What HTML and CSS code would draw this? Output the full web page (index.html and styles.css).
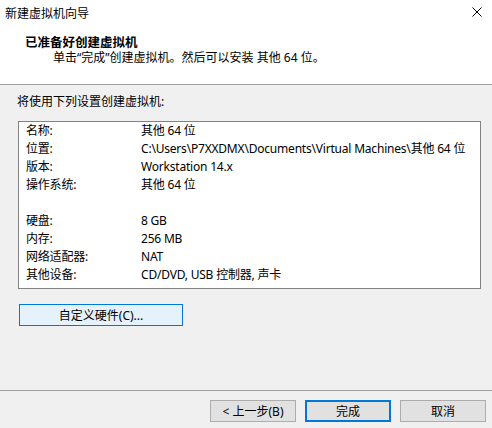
FILE: index.html
```html
<html>
    <head>
        <meta charset="UTF-8">
        <link rel="stylesheet" href="styles.css">
    </head>
    <body>
        <div class="dialog">
            <div class="header">
                <div class="titlebar">
                    <span class="title">新建虚拟机向导</span>
                    <span class="close">
                        <svg width="10" height="10" viewBox="0 0 10 10">
                            <path d="M0.5 0.5 L9.5 9.5 M9.5 0.5 L0.5 9.5" stroke="#000" stroke-width="1" fill="none"/>
                        </svg>
                    </span>
                </div>
                <h1>已准备好创建虚拟机</h1>
                <p class="subtitle">单击“完成”创建虚拟机。然后可以安装 其他 64 位。</p>
            </div>
            <div class="content">
                <p class="intro">将使用下列设置创建虚拟机:</p>
                <div class="summary">
                    <div class="row"><span class="key">名称:</span><span>其他 64 位</span></div>
                    <div class="row"><span class="key">位置:</span><span>C:\Users\P7XXDMX\Documents\Virtual Machines\其他 64 位</span></div>
                    <div class="row"><span class="key">版本:</span><span>Workstation 14.x</span></div>
                    <div class="row"><span class="key">操作系统:</span><span>其他 64 位</span></div>
                    <div class="row"></div>
                    <div class="row"><span class="key">硬盘:</span><span>8 GB</span></div>
                    <div class="row"><span class="key">内存:</span><span>256 MB</span></div>
                    <div class="row"><span class="key">网络适配器:</span><span>NAT</span></div>
                    <div class="row"><span class="key">其他设备:</span><span>CD/DVD, USB 控制器, 声卡</span></div>
                </div>
                <button class="btn customize">自定义硬件(C)...</button>
            </div>
            <div class="footer">
                <button class="btn">&lt; 上一步(B)</button>
                <button class="btn default">完成</button>
                <button class="btn">取消</button>
            </div>
        </div>
    </body>
</html>
```

FILE: styles.css
```css
body {
    margin: 0;
    font-family: "Noto Sans", "Noto Sans CJK SC", sans-serif;
    font-size: 12px;
    color: #000;
}

.dialog {
    width: 492px;
    height: 428px;
    display: flex;
    flex-direction: column;
    background-color: #f0f0f0;
}

.header {
    background-color: #fff;
    height: 84px;
    border-bottom: 1px solid #a0a0a0;
}

.titlebar {
    display: flex;
    justify-content: space-between;
    align-items: center;
    height: 25px;
    padding: 0 10px 0 5px;
}

.close {
    display: flex;
    margin-top: -1px;
}

h1 {
    margin: 11px 0 0 25px;
    font-size: 12.5px;
    font-weight: bold;
    line-height: 14px;
}

.subtitle {
    margin: 0 0 0 53px;
    line-height: 15px;
}

.content {
    flex: 1;
    padding: 9px 11px 0 18px;
}

.intro {
    margin: 0 0 11px -1px;
    line-height: 16px;
}

.summary {
    background-color: #fff;
    border: 1px solid #828282;
    height: 166px;
    padding-left: 7px;
    letter-spacing: -0.2px;
}

.row {
    display: flex;
    height: 18px;
    line-height: 18px;
    white-space: nowrap;
}

.key {
    width: 115px;
}

.btn {
    font-family: inherit;
    font-size: 12px;
    color: #000;
    width: 86px;
    height: 22px;
    padding: 0;
    background-color: #e1e1e1;
    border: 1px solid #adadad;
}

.customize {
    margin: 15px 0 0 1px;
    width: 164px;
    background-color: #e5f1fb;
    border-color: #0078d7;
}

.default {
    border-color: #0078d7;
    box-shadow: inset 0 0 0 1px #0078d7;
}

.footer {
    display: flex;
    justify-content: flex-end;
    gap: 9px;
    height: 38px;
    padding: 9px 6px 0 0;
    box-sizing: border-box;
    border-top: 1px solid #a0a0a0;
}
```
